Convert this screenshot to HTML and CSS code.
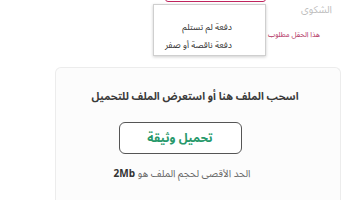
FILE: index.html
```html
<!DOCTYPE html>
<html lang="ar" dir="rtl">
<head>
<meta charset="utf-8">
<link rel="stylesheet" href="styles.css">
</head>
<body>
<div class="page">
  <div class="form-row">
    <div class="field-meta">
      <div class="label">الشكوى</div>
      <div class="error">هذا الحقل مطلوب</div>
    </div>
    <div class="field">
      <div class="select-input"></div>
      <ul class="dropdown">
        <li class="option">دفعة لم تستلم</li>
        <li class="option">دفعة ناقصة أو صفر</li>
      </ul>
    </div>
  </div>
  <div class="upload-card">
    <div class="drag-text">اسحب الملف هنا أو استعرض الملف للتحميل</div>
    <button class="upload-btn">تحميل وثيقة</button>
    <div class="limit">الحد الأقصى لحجم الملف هو <b>2Mb</b></div>
  </div>
</div>
</body>
</html>
```
FILE: styles.css
```css
html, body {
  margin: 0;
  padding: 0;
  background: #ffffff;
  width: 360px;
  height: 200px;
  overflow: hidden;
}
.page {
  font-family: "Noto Sans Arabic", "DejaVu Sans", sans-serif;
  direction: rtl;
}
.form-row {
  display: flex;
  height: 67px;
}
.field-meta {
  width: 66px;
  margin-right: 28px;
  display: flex;
  flex-direction: column;
  align-items: flex-start;
}
.label {
  font-size: 10px;
  color: #bdbdbd;
  margin-top: 3px;
  line-height: 14px;
}
.error {
  font-size: 7.2px;
  color: #b2315f;
  margin-top: 12px;
  line-height: 12px;
  margin-right: 12px;
  white-space: nowrap;
}
.field {
  position: relative;
  width: 101px;
}
.select-input {
  height: 30px;
  margin-top: -28px;
  border: 1px solid #c0245e;
  border-radius: 3px;
  box-sizing: border-box;
}
.dropdown {
  position: absolute;
  top: 4px;
  right: 0;
  width: 113px;
  height: 52px;
  box-sizing: border-box;
  margin: 0;
  padding: 13px 33px 0 0;
  list-style: none;
  background: #fff;
  border: 1px solid #cfcfcf;
  box-shadow: 0 1px 3px rgba(0,0,0,0.2);
}
.option {
  font-size: 8.8px;
  color: #333;
  line-height: 18px;
  height: 18px;
  white-space: nowrap;
}
.upload-card {
  margin: 0 19px 0 55px;
  height: 133px;
  box-sizing: border-box;
  border: 1px solid #ececec;
  border-bottom: none;
  border-radius: 6px 6px 0 0;
  background: #fcfcfc;
  display: flex;
  flex-direction: column;
  align-items: center;
}
.drag-text {
  font-size: 10.6px;
  font-weight: bold;
  color: #3a3a3a;
  margin-top: 22px;
  line-height: 14px;
  margin-right: 6px;
}
.upload-btn {
  margin-top: 18px;
  width: 123px;
  height: 32px;
  border: 1px solid #555;
  border-radius: 6px;
  background: #fff;
  color: #27996b;
  font-family: inherit;
  font-size: 12px;
  font-weight: bold;
  margin-right: 36px;
}
.limit {
  font-size: 10px;
  color: #666;
  margin-top: 13px;
  line-height: 14px;
  margin-right: 32px;
}
.limit b {
  color: #333;
}
```
